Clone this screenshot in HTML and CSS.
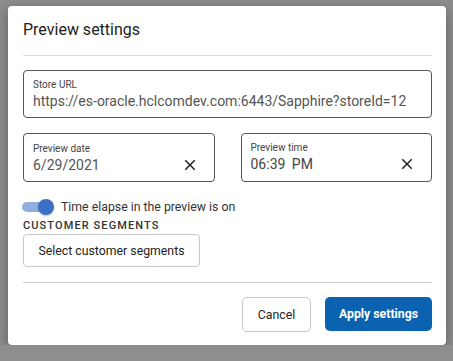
FILE: index.html
```html
<!DOCTYPE html>
<html lang="en">
<head>
  <meta charset="UTF-8">
  <meta name="viewport" content="width=device-width, initial-scale=1.0">
  <title>Preview settings</title>
  <link rel="stylesheet" href="styles.css">
</head>
<body>

  <div class="dialog">
    <h1 class="dialog-title">Preview settings</h1>
    <hr class="divider">

    <!-- Store URL -->
    <div class="field">
      <div class="field-body">
        <label class="field-label">Store URL</label>
        <div class="field-value">https://es-oracle.hclcomdev.com:6443/Sapphire?storeId=12</div>
      </div>
    </div>

    <!-- Data e hora -->
    <div class="field-row">
      <div class="field">
        <div class="field-body">
          <label class="field-label">Preview date</label>
          <div class="field-value">6/29/2021</div>
        </div>
        <svg class="clear-icon" viewBox="0 0 24 24" width="18" height="18">
          <path d="M19 6.41 17.59 5 12 10.59 6.41 5 5 6.41 10.59 12 5 17.59 6.41 19 12 13.41 17.59 19 19 17.59 13.41 12z"/>
        </svg>
      </div>
      <div class="field field-time">
        <div class="field-body">
          <label class="field-label">Preview time</label>
          <div class="field-value time-value">06:39 PM</div>
        </div>
        <svg class="clear-icon" viewBox="0 0 24 24" width="18" height="18">
          <path d="M19 6.41 17.59 5 12 10.59 6.41 5 5 6.41 10.59 12 5 17.59 6.41 19 12 13.41 17.59 19 19 17.59 13.41 12z"/>
        </svg>
      </div>
    </div>

    <div class="toggle-row">
      <span class="toggle"><span class="toggle-thumb"></span></span>
      <span>Time elapse in the preview is on</span>
    </div>

    <div class="section-label">CUSTOMER SEGMENTS</div>
    <button class="btn btn-outline">Select customer segments</button>

    <hr class="divider divider-footer">

    <div class="dialog-actions">
      <button class="btn btn-outline btn-cancel">Cancel</button>
      <button class="btn btn-primary">Apply settings</button>
    </div>
  </div>

</body>
</html>
```

FILE: styles.css
```css
body {
  font-family: Roboto, "Liberation Sans", Arial, sans-serif;
  background-color: #8e8e8e;
  margin: 0;
  padding: 6px 7px 0 8px;
}
.dialog {
  width: 438px;
  box-sizing: border-box;
  background-color: #fff;
  border-radius: 4px;
  padding: 12px 14px 13px 15px;
  box-shadow: 0 4px 14px rgba(0, 0, 0, 0.35);
}
.dialog-title {
  margin: 0;
  font-size: 16px;
  line-height: 24px;
  font-weight: 400;
  color: #222;
}
.divider {
  border: none;
  height: 1px;
  background-color: #dcdcdc;
  margin: 13px 0 0;
}
/* Campos */
.field {
  display: flex;
  align-items: center;
  border: 1px solid #555;
  border-radius: 4px;
  padding: 7px 15px 7px 9px;
  margin-top: 14px;
}
.field-body {
  flex: 1;
  min-width: 0;
}
.field-label {
  display: block;
  font-size: 10px;
  line-height: 13px;
  color: #444;
  margin-bottom: 1px;
}
.field-value {
  font-size: 14px;
  line-height: 18px;
  color: #555;
  white-space: nowrap;
}
.time-value {
  word-spacing: 3px;
  color: #444;
}
.clear-icon {
  fill: #222;
  margin-top: 14px;
}
.field-row {
  display: flex;
  gap: 26px;
  margin-top: 15px;
}
.field-row .field {
  flex: 1;
  margin-top: 0;
}
.field-time {
  padding-bottom: 8px;
}
/* Toggle */
.toggle-row {
  display: flex;
  align-items: center;
  margin-top: 16px;
  font-size: 12.3px;
  line-height: 18px;
  color: #333;
}
.toggle {
  position: relative;
  width: 32px;
  height: 10px;
  margin-left: -1px;
  margin-right: 7px;
}
.toggle::before {
  content: "";
  display: block;
  width: 28px;
  height: 10px;
  border-radius: 5px;
  background-color: #8fb0de;
}
.toggle-thumb {
  position: absolute;
  right: 0;
  top: -3px;
  width: 16px;
  height: 16px;
  border-radius: 50%;
  background-color: #3a71c4;
  box-shadow: 0 1px 2px rgba(0, 0, 0, 0.25);
}
.section-label {
  margin-top: 3px;
  font-size: 11px;
  line-height: 14px;
  font-weight: 500;
  letter-spacing: 1.1px;
  color: #333;
}
/* Botões */
.btn {
  font-family: inherit;
  font-size: 12.3px;
  border-radius: 4px;
  cursor: pointer;
}
.btn-outline {
  background-color: #fff;
  color: #222;
  border: 1px solid #c8c8c8;
  height: 33px;
  width: 177px;
  margin-top: 1px;
  padding: 0;
}
.divider-footer {
  background-color: #c6cfd9;
  margin-top: 15px;
}
.dialog-actions {
  display: flex;
  justify-content: flex-end;
  gap: 14px;
  margin-top: 14px;
}
.btn-cancel {
  width: 69px;
  height: 35px;
  margin-top: 0;
  border-radius: 5px;
}
.btn-primary {
  background-color: #0a62b0;
  color: #fff;
  border: none;
  font-weight: 700;
  width: 107px;
  height: 34px;
  border-radius: 5px;
}
```
